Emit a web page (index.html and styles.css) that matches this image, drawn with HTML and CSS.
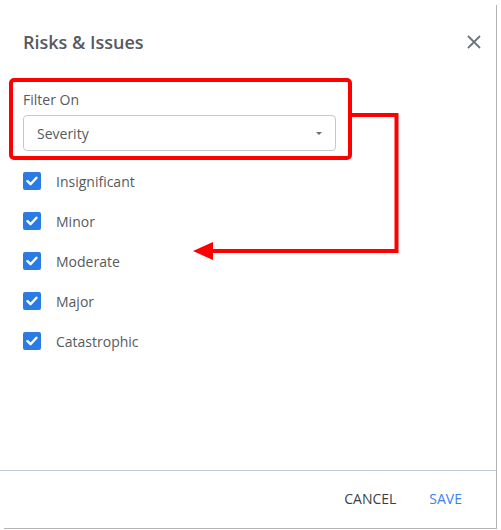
FILE: index.html
```html
<!DOCTYPE html>
<html>
<head>
<meta charset="utf-8">
<link rel="stylesheet" href="styles.css">
</head>
<body>
<div class="frame">
  <div class="dialog">
    <header class="dlg-header">
      <h1 class="dlg-title">Risks &amp; Issues</h1>
      <button class="close" aria-label="Close">
        <svg width="14" height="14" viewBox="0 0 14 14"><path d="M1 1L13 13M13 1L1 13" stroke="#6b7480" stroke-width="1.8" fill="none"/></svg>
      </button>
    </header>
    <main class="dlg-body">
      <div class="field">
        <label class="field-label">Filter On</label>
        <div class="select">
          <span>Severity</span>
          <span class="caret"></span>
        </div>
      </div>
      <ul class="checks">
        <li class="check-row"><span class="box"><svg width="12" height="10" viewBox="0 0 12 10"><path d="M1.5 5.2L4.5 8.2L10.5 1.8" stroke="#fff" stroke-width="2.4" fill="none" stroke-linecap="round" stroke-linejoin="round"/></svg></span>Insignificant</li>
        <li class="check-row"><span class="box"><svg width="12" height="10" viewBox="0 0 12 10"><path d="M1.5 5.2L4.5 8.2L10.5 1.8" stroke="#fff" stroke-width="2.4" fill="none" stroke-linecap="round" stroke-linejoin="round"/></svg></span>Minor</li>
        <li class="check-row"><span class="box"><svg width="12" height="10" viewBox="0 0 12 10"><path d="M1.5 5.2L4.5 8.2L10.5 1.8" stroke="#fff" stroke-width="2.4" fill="none" stroke-linecap="round" stroke-linejoin="round"/></svg></span>Moderate</li>
        <li class="check-row"><span class="box"><svg width="12" height="10" viewBox="0 0 12 10"><path d="M1.5 5.2L4.5 8.2L10.5 1.8" stroke="#fff" stroke-width="2.4" fill="none" stroke-linecap="round" stroke-linejoin="round"/></svg></span>Major</li>
        <li class="check-row"><span class="box"><svg width="12" height="10" viewBox="0 0 12 10"><path d="M1.5 5.2L4.5 8.2L10.5 1.8" stroke="#fff" stroke-width="2.4" fill="none" stroke-linecap="round" stroke-linejoin="round"/></svg></span>Catastrophic</li>
      </ul>
    </main>
    <footer class="dlg-footer">
      <button class="btn">CANCEL</button>
      <button class="btn primary">SAVE</button>
    </footer>
  </div>
  <div class="annot-box"></div>
  <svg class="annot-arrow" width="501" height="530" viewBox="0 0 501 530">
    <path d="M350 115H396.5V251H210" stroke="#ff0000" stroke-width="4" fill="none"/>
    <path d="M193 251L213 242V260Z" fill="#ff0000"/>
  </svg>
</div>
</body>
</html>
```
FILE: styles.css
```css
* { box-sizing: border-box; }
html, body { margin: 0; padding: 0; background: #fff; }
body {
  font-family: "Open Sans", "Noto Sans", sans-serif;
  color: #555a60;
}
.frame {
  position: relative;
  width: 501px;
  height: 530px;
}
.frame::after {
  content: "";
  position: absolute;
  top: 5px;
  left: 496px;
  width: 1px;
  height: 524px;
  background: #b4b4b4;
}
.frame::before {
  content: "";
  position: absolute;
  top: 528px;
  left: 4px;
  width: 493px;
  height: 1px;
  background: #b4b4b4;
}
.dialog {
  width: 496px;
  height: 528px;
  display: flex;
  flex-direction: column;
}
.dlg-header {
  display: flex;
  justify-content: space-between;
  align-items: center;
  padding: 30px 15px 0 23px;
  height: 54px;
}
.dlg-title {
  margin: 0;
  font-size: 18px;
  line-height: 24px;
  font-weight: 600;
  color: #555a60;
}
.close {
  border: 0;
  background: none;
  padding: 0;
  width: 14px;
  height: 14px;
  display: flex;
}
.dlg-body {
  flex: 1;
  padding: 36px 0 0 23px;
}
.field { width: 313px; }
.field-label {
  display: block;
  font-size: 14px;
  line-height: 20px;
  margin-bottom: 5px;
}
.select {
  height: 36px;
  border: 1px solid #c3c9d0;
  border-radius: 4px;
  display: flex;
  align-items: center;
  justify-content: space-between;
  padding: 0 13px 0 13px;
  font-size: 14px;
}
.caret {
  width: 0;
  height: 0;
  border-left: 3px solid transparent;
  border-right: 3px solid transparent;
  border-top: 3px solid #6b6f75;
}
.checks {
  list-style: none;
  margin: 10px 0 0;
  padding: 0;
}
.check-row {
  height: 40px;
  display: flex;
  align-items: center;
  font-size: 14px;
}
.box {
  width: 18px;
  height: 18px;
  border-radius: 2px;
  background: #2b7be5;
  margin-right: 15px;
  display: flex;
  align-items: center;
  justify-content: center;
}
.dlg-footer {
  height: 58px;
  border-top: 1px solid #c3c9d0;
  display: flex;
  justify-content: flex-end;
  align-items: center;
  gap: 33px;
  padding: 0 34px 2px 0;
}
.btn {
  border: 0;
  background: none;
  padding: 0;
  font-family: inherit;
  font-size: 14px;
  line-height: 20px;
  color: #3a3f45;
}
.btn.primary { color: #3b82f0; }
.annot-box {
  position: absolute;
  left: 9px;
  top: 78px;
  width: 343px;
  height: 82px;
  border: 4px solid #ff0000;
  border-radius: 5px;
}
.annot-arrow {
  position: absolute;
  left: 0;
  top: 0;
  pointer-events: none;
}
```
